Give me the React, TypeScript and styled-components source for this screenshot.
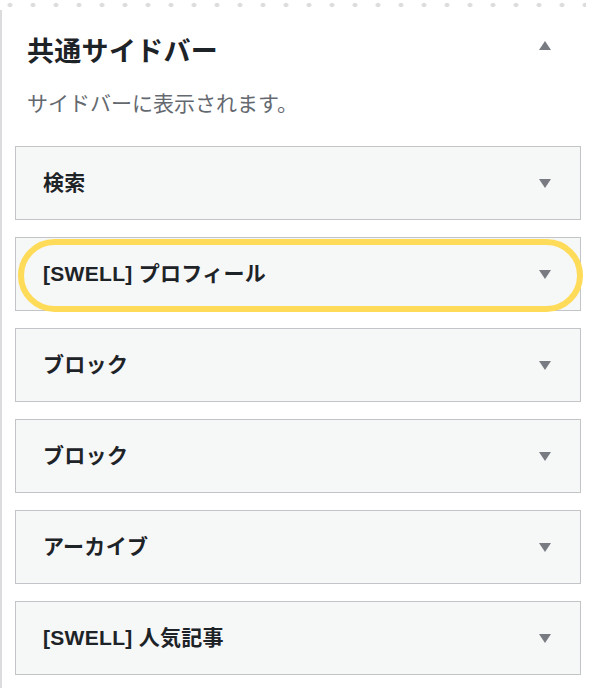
import React from "react";
import styled, { createGlobalStyle } from "styled-components";

const GlobalStyle = createGlobalStyle`
	body {
		margin: 0;
		background: #ffffff;
		font-family: "Liberation Sans", "Noto Sans CJK JP", sans-serif;
		color: #1d2327;
	}
`;

const widgets = [
	{ title: "検索" },
	{ title: "[SWELL] プロフィール", highlighted: true },
	{ title: "ブロック" },
	{ title: "ブロック" },
	{ title: "アーカイブ" },
	{ title: "[SWELL] 人気記事" },
];

const DotRow = styled.div`
	height: 10px;
	background-image: radial-gradient(circle, #dcdcde 2px, transparent 2.6px);
	background-size: 23px 10px;
	background-position: -1.5px 0;
	background-repeat: repeat-x;
	margin-right: 6px;
`;

const Panel = styled.div`
	border-left: 2px solid #dcdcde;
	padding: 0 11px 14px 13px;
	min-height: 668px;
	box-sizing: border-box;
`;

const Header = styled.div`
	display: flex;
	align-items: flex-start;
	justify-content: space-between;
	padding: 24px 30px 0 12px;
`;

const Title = styled.h2`
	margin: 0;
	font-size: 27px;
	line-height: 36px;
	font-weight: 700;
	letter-spacing: 0.3px;
`;

const Caret = styled.span<{ up?: boolean }>`
	width: 0;
	height: 0;
	border-left: 6px solid transparent;
	border-right: 6px solid transparent;
	${({ up }) =>
		up
			? "border-bottom: 9px solid #787c82;"
			: "border-top: 9px solid #787c82;"}
`;

const HeaderCaret = styled(Caret)`
	margin-top: 7px;
`;

const Description = styled.p`
	margin: 20px 0 0 12px;
	font-size: 21px;
	line-height: 28px;
	color: #646970;
`;

const WidgetList = styled.div`
	display: flex;
	flex-direction: column;
	gap: 17px;
	margin-top: 28px;
`;

const Widget = styled.div`
	position: relative;
	height: 74px;
	box-sizing: border-box;
	display: flex;
	align-items: center;
	justify-content: space-between;
	padding: 0 29px 0 27px;
	background: #f6f7f7;
	border: 1px solid #c3c4c7;
`;

const WidgetTitle = styled.span`
	font-size: 21px;
	line-height: 1;
	font-weight: 700;
	letter-spacing: 0.3px;
	color: #1d2327;
	margin-bottom: 1px;
`;

const Highlight = styled.span`
	position: absolute;
	top: 1px;
	left: 2px;
	right: -3px;
	bottom: -2px;
	border: 6px solid #fedb58;
	border-radius: 40px;
	pointer-events: none;
`;

export default function App() {
	return (
		<>
			<GlobalStyle />
			<DotRow />
			<Panel>
				<Header>
					<Title>共通サイドバー</Title>
					<HeaderCaret up />
				</Header>
				<Description>サイドバーに表示されます。</Description>
				<WidgetList>
					{widgets.map((w, i) => (
						<Widget key={i}>
							<WidgetTitle>{w.title}</WidgetTitle>
							<Caret />
							{w.highlighted && <Highlight />}
						</Widget>
					))}
				</WidgetList>
			</Panel>
		</>
	);
}
